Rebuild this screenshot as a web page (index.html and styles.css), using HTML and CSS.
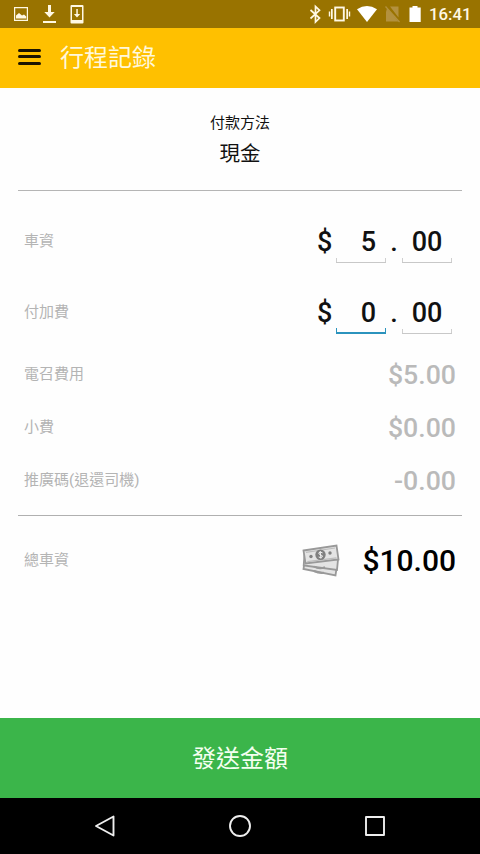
FILE: index.html
```html
<!DOCTYPE html>
<html lang="zh-Hant">
<head>
<meta charset="utf-8">
<title>行程記錄</title>
<link rel="stylesheet" href="styles.css">
</head>
<body>
<div class="status">
  <svg class="status-left" width="90" height="28" viewBox="0 0 90 28" fill="#fff8e4">
    <path fill-rule="evenodd" d="M14 7h14v14H14zM15.2 8.2v11.6h11.6V8.2zM16 18.5v-3l3-2.500 3 2.500 2-1 2.200 2v2z"/>
    <path d="M48 5h3v7h3.700l-5.200 5.500-5.200-5.500H48zM43 21h13v2H43z"/>
    <path fill-rule="evenodd" d="M71.500 5h11a1 1 0 0 1 1 1v16.500a1 1 0 0 1-1 1h-11a1 1 0 0 1-1-1V6a1 1 0 0 1 1-1zM72 7v13h10V7zM76.300 9h1.500v5h2.400L77 17.500 73.900 14h2.400z"/>
  </svg>
  <div class="status-right">
    <svg width="122" height="28" viewBox="303 0 122 28" fill="#fff8e4">
      <path d="M310.500 10l9 8-4 4V6.500l4 3.800-9 8.200" fill="none" stroke="#fff8e4" stroke-width="1.700"/>
      <rect x="335.200" y="7.500" width="8.600" height="13" fill="none" stroke="#fff8e4" stroke-width="1.900"/>
      <path d="M331 9h1.700v10H331zM328.800 11.500h1.400v5h-1.400zM346.300 9h1.700v10h-1.700zM348.800 11.500h1.400v5h-1.400z"/>
      <path d="M357 9.200q10-6.500 20 0L367 22z" fill="#fff"/>
      <path d="M387 8.200L398.500 21.500H386V12zM390 6.500h8.500v11z" fill="#b3913f"/>
      <path d="M385.500 6.500l14 15.500" stroke="#b3913f" stroke-width="1.200"/>
      <path d="M409.500 7.500h3V6h5v1.500h3.200V22h-11.200z" fill="#fff"/>
    </svg>
    <span class="clock">16:41</span>
  </div>
</div>

<header class="appbar">
  <div class="menu"><i></i><i></i><i></i></div>
  <h1>行程記錄</h1>
</header>

<main>
  <section class="method">
    <div class="method-label">付款方法</div>
    <div class="method-value">現金</div>
  </section>
  <section class="rows">
    <div class="row tall">
      <span class="label">車資</span>
      <div class="entry"><span class="cur">$</span><span class="field whole">5</span><span class="dot">.</span><span class="field">00</span></div>
    </div>
    <div class="row tall">
      <span class="label">付加費</span>
      <div class="entry"><span class="cur">$</span><span class="field whole active">0</span><span class="dot">.</span><span class="field">00</span></div>
    </div>
    <div class="row"><span class="label">電召費用</span><span class="amount">$5.00</span></div>
    <div class="row"><span class="label">小費</span><span class="amount">$0.00</span></div>
    <div class="row"><span class="label">推廣碼(退還司機)</span><span class="amount">-0.00</span></div>
  </section>
  <section class="row total">
    <span class="label">總車資</span>
    <svg class="cash" width="38" height="34" viewBox="0 0 38 34">
      <g stroke="#999" stroke-width="1.800" fill="#e4e4e4">
        <path d="M3 15L35 21 33.500 31.500 1.500 25z"/>
        <path d="M2.500 11L36 15.500 35 26 1.700 21.500z"/>
        <path d="M1.500 6.500L34.500 1.500 36.500 15.500 3.500 19.500z"/>
      </g>
      <path d="M3.900 8.300L33 4M5.300 17.600L34.500 13.800" stroke="#bdbdbd" stroke-width="1.200"/>
      <path d="M12 22.500q5 3 11 .8M12 27q5 2.500 10 1.800" stroke="#999" stroke-width="2" fill="none"/>
      <circle cx="18.500" cy="10.800" r="5.200" fill="#808080"/>
      <circle cx="9" cy="12.500" r="1.700" fill="#808080"/>
      <circle cx="28" cy="9" r="1.700" fill="#808080"/>
      <path d="M20.600 8.900q-2-1.400-3.600-.3-1 1.400 1.500 2.200 2.700.7 1.700 2.200-1.500 1.200-3.500 0M18.200 7l.7 7.600" fill="none" stroke="#f0f0f0" stroke-width="1"/>
    </svg>
    <span class="sum">$10.00</span>
  </section>
</main>

<div class="send">發送金額</div>

<nav class="navbar">
  <svg width="24" height="24" viewBox="0 0 24 24"><path d="M3 12L20.500 2.500V21.500z"/></svg>
  <svg width="24" height="24" viewBox="0 0 24 24"><circle cx="12" cy="12" r="10"/></svg>
  <svg width="24" height="24" viewBox="0 0 24 24"><rect x="3" y="3" width="18" height="18"/></svg>
</nav>
</body>
</html>
```

FILE: styles.css
```css
* { box-sizing: border-box; }
body {
  margin: 0;
  height: 854px;
  display: flex;
  flex-direction: column;
  background: #fefefe;
  font-family: Roboto, "Noto Sans CJK TC", sans-serif;
  color: #111;
  overflow: hidden;
}
.status {
  height: 28px;
  flex: none;
  background: #997300;
  display: flex;
  justify-content: space-between;
}
.status-right { display: flex; align-items: center; padding-right: 9px; }
.clock {
  width: 42px;
  margin-left: 4px;
  font-size: 16.800px;
  font-weight: 500;
  line-height: 29px;
  color: #fff8e4;
}
.appbar {
  height: 60px;
  flex: none;
  background: #ffc000;
  display: flex;
  align-items: center;
  padding: 0 18px 3px;
  gap: 19px;
}
.menu { width: 23px; display: flex; flex-direction: column; gap: 3.500px; }
.menu i { height: 3px; border-radius: 1.500px; background: #1c1400; }
h1 { margin: 0; padding-top: 2px; font-size: 24px; line-height: 36px; font-weight: 400; color: #fff8dc; }
main { flex: 1; padding: 0 18px; }
.method {
  height: 103px;
  padding-top: 24px;
  text-align: center;
  border-bottom: 1px solid #b5b5b5;
}
.method-label { font-size: 15px; line-height: 22px; }
.method-value { font-size: 20.500px; line-height: 30px; margin-top: 5px; }
.rows { padding: 15px 0 8px; border-bottom: 1px solid #b0b0b0; }
.row {
  height: 53px;
  padding: 0 6px;
  display: flex;
  align-items: center;
}
.row.tall { height: 71px; }
.label { flex: 1; font-size: 15px; line-height: 22px; padding-bottom: 1px; color: #b4b4b4; }
.amount { font-size: 26.700px; font-weight: 500; padding-top: 1px; color: #bababa; }
.entry {
  display: flex;
  font-size: 27px;
  font-weight: 500;
  line-height: 40px;
  padding: 2px 4px 1px 0;
}
.cur { width: 19px; }
.field {
  position: relative;
  width: 50px;
  height: 41px;
  text-align: center;
  border-bottom: 1px solid #c8c8c8;
}
.field::after {
  content: "";
  position: absolute;
  left: 0;
  right: 0;
  bottom: 0;
  height: 4px;
  border: solid #cfcfcf;
  border-width: 0 1px;
}
.whole { text-align: right; padding-right: 10px; }
.active { border-bottom: 2px solid #2b93bd; }
.active::after { border-color: #2b93bd; }
.dot { width: 16px; text-align: center; }
.total { height: 88px; padding-top: 1px; }
.cash { margin-right: 22px; }
.sum { font-size: 30px; font-weight: 500; color: #000; }
.send {
  height: 80px;
  flex: none;
  background: #3bb54a;
  color: #f4fff0;
  font-size: 24px;
  line-height: 83px;
  text-align: center;
}
.navbar {
  height: 56px;
  flex: none;
  background: #000;
  display: flex;
  align-items: center;
  justify-content: center;
  gap: 111px;
}
.navbar svg { fill: none; stroke: #eee; stroke-width: 1.900; stroke-linejoin: round; }
```
